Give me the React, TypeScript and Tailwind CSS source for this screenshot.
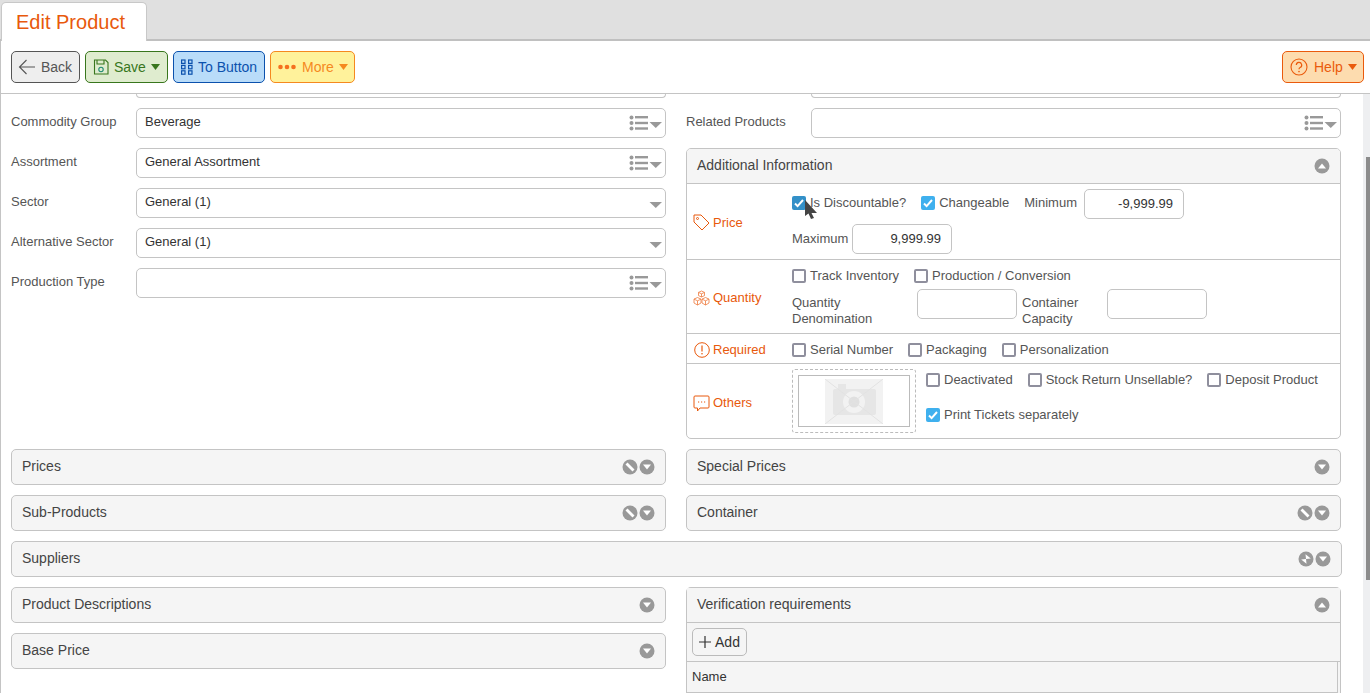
import type { ReactNode } from 'react';

const ORANGE = 'text-[#e8590c]';

function ListCaret({ list = true }: { list?: boolean }) {
  return (
    <svg width="34" height="16" viewBox="0 0 34 16" className="shrink-0">
      {list && (
        <g fill="#999" transform="translate(1 0)">
          <circle cx="2.5" cy="2.5" r="2" />
          <circle cx="2.5" cy="8" r="2" />
          <circle cx="2.5" cy="13.5" r="2" />
          <rect x="6" y="1" width="13" height="2.4" />
          <rect x="6" y="6.8" width="13" height="2.4" />
          <rect x="6" y="12.3" width="13" height="2.4" />
        </g>
      )}
      <path d="M21.500 7h12.500l-6.250 6z" fill="#999" />
    </svg>
  );
}

function Field({ label, value, list = true }: { label: string; value?: string; list?: boolean }) {
  return (
    <div className="flex items-start">
      <div className="w-[125px] shrink-0 pt-[6px] text-[13px] leading-[15px] text-[#555]">{label}</div>
      <div className="flex h-[30px] flex-1 items-center justify-between rounded-[5px] border border-[#c4c4c4] bg-white pl-2 pr-[3px]">
        <span className="-mt-[3px] text-[13px] text-[#333]">{value}</span>
        <ListCaret list={list} />
      </div>
    </div>
  );
}

function RoundIcon({ kind }: { kind: 'up' | 'down' | 'slash' | 'cross' }) {
  return (
    <svg width="16" height="16" viewBox="0 0 16 16" className="shrink-0">
      <circle cx="8" cy="8" r="7.5" fill="#999" />
      {kind === 'up' && <path d="M4 10.5h8L8 5.5z" fill="#fff" />}
      {kind === 'down' && <path d="M4 5.5h8L8 10.5z" fill="#fff" />}
      {kind === 'slash' && <path d="M4.500 4.500l7 7" stroke="#fff" strokeWidth="2.800" />}
      {kind === 'cross' && (
        <g fill="#fff">
          <path d="M8 8l-.5-4.800 5.300 4.300z" />
          <path d="M8 8l.5 4.800-5.300-4.300z" />
        </g>
      )}
    </svg>
  );
}

function PanelHeader({ title, icons, bare }: { title: string; icons: ('up' | 'down' | 'slash' | 'cross')[]; bare?: boolean }) {
  return (
    <div
      className={`flex items-center justify-between bg-[#f5f5f5] pl-[10px] pr-[10px] ${
        bare ? 'h-[35px] border-b border-[#c4c4c4]' : 'h-[36px] rounded-[5px] border border-[#c4c4c4]'
      }`}
    >
      <span className="-mt-[2px] text-[14px] text-[#444]">{title}</span>
      <div className="flex items-center gap-[1px]">
        {icons.map((k, i) => (
          <RoundIcon key={i} kind={k} />
        ))}
      </div>
    </div>
  );
}

function Check({ label, checked, hover }: { label: string; checked?: boolean; hover?: boolean }) {
  return (
    <label className="flex items-center gap-1 text-[13px] leading-[15px] text-[#555]">
      <span
        className={`flex h-[14px] w-[14px] shrink-0 items-center justify-center rounded-[2px] ${
          checked
            ? hover
              ? 'bg-[#3390c8]'
              : 'bg-[#3fb0ee]'
            : 'border-2 border-[#8f8f9d] bg-white'
        }`}
      >
        {checked && (
          <svg width="10" height="10" viewBox="0 0 10 10">
            <path d="M1 5.5l2.6 2.6L9 2" fill="none" stroke="#fff" strokeWidth="2" />
          </svg>
        )}
      </span>
      {label}
    </label>
  );
}

function NumInput({ value }: { value?: string }) {
  return (
    <div className="flex h-[30px] w-[100px] shrink-0 items-center justify-end rounded-[5px] border border-[#c4c4c4] bg-white pr-[10px] text-[13px] text-[#333]">
      {value}
    </div>
  );
}

function InfoRow({
  icon,
  label,
  height,
  children,
  last,
}: {
  icon: ReactNode;
  label: string;
  height: string;
  children: ReactNode;
  last?: boolean;
}) {
  return (
    <div className={`flex ${height} ${last ? '' : 'border-b border-[#c4c4c4]'}`}>
      <div className={`flex w-[105px] shrink-0 items-center gap-[3px] pl-[6px] text-[13px] ${last ? 'pt-[4px]' : 'pt-[2px]'} ${ORANGE}`}>
        <span className="flex w-[17px] justify-center">{icon}</span>
        {label}
      </div>
      <div className="flex-1">{children}</div>
    </div>
  );
}

function Btn({
  className,
  icon,
  label,
  caret,
  caretColor,
}: {
  className: string;
  icon: ReactNode;
  label: string;
  caret?: boolean;
  caretColor?: string;
}) {
  return (
    <button className={`flex h-[32px] items-center rounded-[5px] border text-[14px] ${className}`}>
      {icon}
      <span>{label}</span>
      {caret && (
        <svg width="9" height="6" viewBox="0 0 9 6" className="ml-[5px]">
          <path d="M0 0h9L4.5 6z" fill={caretColor} />
        </svg>
      )}
    </button>
  );
}

function CameraPlaceholder() {
  return (
    <svg width="58" height="45" viewBox="0 0 58 45">
      <rect width="58" height="45" rx="2" fill="#f2f2f2" />
      <rect x="8" y="10" width="43" height="26" rx="2" fill="#e6e6e6" />
      <rect x="13" y="5" width="8" height="6" fill="#e6e6e6" />
      <circle cx="29" cy="23" r="11" fill="#f2f2f2" />
      <circle cx="29" cy="23" r="5.5" fill="#e0e0e0" />
      <path d="M0 0l58 45M58 0L0 45" stroke="#e2e2e2" strokeWidth="1" />
    </svg>
  );
}

export default function App() {
  return (
    <div className="flex h-[693px] w-[1370px] flex-col overflow-hidden bg-white [font-family:Liberation_Sans,Arial,sans-serif]">
      {/* Tab bar */}
      <div className="flex h-[41px] shrink-0 items-end border-b-2 border-[#c0c0c0] bg-[#e0e0e0] pl-[1px]">
        <div className="-mb-[2px] flex h-[39px] w-[146px] items-center rounded-t-[5px] border-x border-t border-[#c8c8c8] bg-white pl-[14px] text-[20px] text-[#e8590c]">
          Edit Product
        </div>
      </div>

      {/* Toolbar */}
      <div className="flex h-[53px] shrink-0 items-center justify-between border-b border-l border-[#c4c4c4] pl-[10px] pr-[5px]">
        <div className="flex items-center gap-[5px]">
          <Btn
            className="w-[69px] border-[#555] bg-[#eeeeee] pl-[6px] text-[#555]"
            label="Back"
            icon={
              <svg width="18" height="16" viewBox="0 0 18 16" className="mr-[5px]">
                <path d="M17 8H1.500M8.500 1L1.500 8l7 7" fill="none" stroke="#555" strokeWidth="1.100" />
              </svg>
            }
          />
          <Btn
            className="w-[83px] border-[#38761d] bg-[#dfeccf] pl-[7px] text-[#38761d]"
            label="Save"
            caret
            caretColor="#38761d"
            icon={
              <svg width="16" height="16" viewBox="0 0 16 16" className="mr-[5px]">
                <path d="M1.500 1h11L15 3.500V15H1.500z" fill="none" stroke="#38761d" strokeWidth="1.100" />
                <path d="M4 1v4h7V1" fill="none" stroke="#38761d" strokeWidth="1.100" />
                <circle cx="8" cy="10.500" r="2.200" fill="none" stroke="#1f8a70" strokeWidth="1.100" />
              </svg>
            }
          />
          <Btn
            className="w-[92px] border-[#0b51ad] bg-[#b9dcf9] pl-[7px] text-[#0b51ad]"
            label="To Button"
            icon={
              <svg width="12" height="16" viewBox="0 0 12 16" className="mr-[5px]">
                <g fill="none" stroke="#0b51ad" strokeWidth="1.200">
                  <rect x="0.600" y="1" width="3.400" height="3.400" />
                  <rect x="7.600" y="1" width="3.400" height="3.400" />
                  <rect x="0.600" y="6.400" width="3.400" height="3.400" />
                  <rect x="7.600" y="6.400" width="3.400" height="3.400" />
                  <rect x="0.600" y="11.800" width="3.400" height="3.400" />
                  <rect x="7.600" y="11.800" width="3.400" height="3.400" />
                </g>
              </svg>
            }
          />
          <Btn
            className="w-[85px] border-[#f5891f] bg-[#fff29b] pl-[7px] text-[#f5891f]"
            label="More"
            caret
            caretColor="#f5891f"
            icon={
              <svg width="18" height="6" viewBox="0 0 18 6" className="mr-[6px]">
                <g fill="#f5701f">
                  <circle cx="2.500" cy="3" r="2.300" />
                  <circle cx="9" cy="3" r="2.300" />
                  <circle cx="15.500" cy="3" r="2.300" />
                </g>
              </svg>
            }
          />
        </div>
        <Btn
          className="mr-[1px] w-[82px] border-[#ea5a0c] bg-[#fddcaf] pl-[7px] text-[#ea5a0c]"
          label="Help"
          caret
          caretColor="#ea5a0c"
          icon={
            <svg width="18" height="18" viewBox="0 0 18 18" className="mr-[6px]">
              <circle cx="9" cy="9" r="8" fill="none" stroke="#ea5a0c" strokeWidth="1.100" />
              <path d="M6.300 7a2.700 2.700 0 1 1 3.800 2.500c-.8.4-1.100.9-1.100 1.800" fill="none" stroke="#ea5a0c" strokeWidth="1.200" />
              <circle cx="9" cy="13.600" r=".8" fill="#ea5a0c" />
            </svg>
          }
        />
      </div>

      {/* Scrolled content */}
      <div className="flex min-h-0 flex-1 border-l border-[#c4c4c4]">
        <div className="w-[1361px] shrink-0 overflow-hidden pl-[10px]">
          {/* Clipped row */}
          <div className="flex gap-[20px]">
            <div className="ml-[125px] h-[4px] w-[530px] rounded-b-[5px] border-x border-b border-[#c4c4c4]" />
            <div className="ml-[125px] h-[4px] w-[530px] rounded-b-[5px] border-x border-b border-[#c4c4c4]" />
          </div>

          <div className="mt-[10px] flex gap-[20px]">
            <div className="flex w-[655px] shrink-0 flex-col gap-[10px]">
              <Field label="Commodity Group" value="Beverage" />
              <Field label="Assortment" value="General Assortment" />
              <Field label="Sector" value="General (1)" list={false} />
              <Field label="Alternative Sector" value="General (1)" list={false} />
              <Field label="Production Type" />
            </div>

            <div className="flex w-[655px] shrink-0 flex-col gap-[10px]">
              <Field label="Related Products" />

              <div className="overflow-hidden rounded-[5px] border border-[#c4c4c4]">
                <PanelHeader title="Additional Information" icons={['up']} bare />

                <InfoRow
                  label="Price"
                  height="h-[76px]"
                  icon={
                    <svg width="17" height="17" viewBox="0 0 17 17">
                      <path d="M1 1h7l8 8-7 7-8-8z" fill="none" stroke="#e8590c" strokeWidth="1" strokeLinejoin="round" />
                      <circle cx="4.500" cy="4.500" r="1" fill="none" stroke="#e8590c" />
                    </svg>
                  }
                >
                  <div className="flex h-[35px] items-center pt-[4px]">
                    <div className="-mt-[2px] flex items-center">
                      <Check label="Is Discountable?" checked hover />
                      <div className="ml-[15px]">
                        <Check label="Changeable" checked />
                      </div>
                      <span className="ml-[15px] text-[13px] text-[#555]">Minimum</span>
                    </div>
                    <div className="ml-[7px]">
                      <NumInput value="-9,999.99" />
                    </div>
                  </div>
                  <div className="mt-[5px] flex items-center">
                    <span className="w-[60px] text-[13px] text-[#555]">Maximum</span>
                    <NumInput value="9,999.99" />
                  </div>
                </InfoRow>

                <InfoRow
                  label="Quantity"
                  height="h-[74px]"
                  icon={
                    <svg width="17" height="16" viewBox="0 0 17 16">
                      <g fill="none" stroke="#ee7a3c" strokeWidth=".8">
                        <path d="M8.500 1l3 1.400v3.200l-3 1.400-3-1.400V2.400z" />
                        <path d="M5.500 2.400l3 1.400 3-1.400M8.500 3.800V7" />
                        <path d="M4.500 7.500l3.500 1.600v3.900L4.500 15 1 13V9.100z" />
                        <path d="M1 9.100l3.500 1.700 3.500-1.700M4.500 10.800V15" />
                        <path d="M12.500 7.500l3.500 1.600v3.900L12.500 15 9 13V9.100z" />
                        <path d="M9 9.100l3.500 1.700 3.500-1.700M12.500 10.800V15" />
                      </g>
                    </svg>
                  }
                >
                  <div className="flex gap-[15px] pt-[8px]">
                    <Check label="Track Inventory" />
                    <Check label="Production / Conversion" />
                  </div>
                  <div className="mt-[6px] flex">
                    <div className="w-[125px] pt-[6px] text-[13px] leading-[16px] text-[#555]">
                      Quantity
                      <br />
                      Denomination
                    </div>
                    <NumInput />
                    <div className="ml-[5px] w-[85px] pt-[6px] text-[13px] leading-[16px] text-[#555]">
                      Container
                      <br />
                      Capacity
                    </div>
                    <NumInput />
                  </div>
                </InfoRow>

                <InfoRow
                  label="Required"
                  height="h-[30px]"
                  icon={
                    <svg width="16" height="16" viewBox="0 0 16 16">
                      <circle cx="8" cy="8" r="7.300" fill="none" stroke="#e8590c" strokeWidth="1" />
                      <path d="M8 3.500v6" stroke="#e8590c" strokeWidth="1.200" />
                      <circle cx="8" cy="11.800" r=".8" fill="#e8590c" />
                    </svg>
                  }
                >
                  <div className="flex h-full items-center gap-[15px] pt-[2px]">
                    <Check label="Serial Number" />
                    <Check label="Packaging" />
                    <Check label="Personalization" />
                  </div>
                </InfoRow>

                <InfoRow
                  label="Others"
                  height="h-[74px]"
                  last
                  icon={
                    <svg width="17" height="17" viewBox="0 0 17 17">
                      <path d="M2 1h13a1 1 0 0 1 1 1v10a1 1 0 0 1-1 1H7l-2.500 3v-3H2a1 1 0 0 1-1-1V2a1 1 0 0 1 1-1z" fill="none" stroke="#e8590c" strokeWidth="1" />
                      <path d="M5 7h1.200M8 7h1.200M11 7h1.200" stroke="#e8590c" strokeWidth="1" />
                    </svg>
                  }
                >
                  <div className="flex pt-[5px]">
                    <div className="flex h-[64px] w-[124px] shrink-0 items-center justify-center rounded-[3px] border border-dashed border-[#bbb]">
                      <div className="flex h-[52px] w-[112px] items-center justify-center border border-[#bbb]">
                        <CameraPlaceholder />
                      </div>
                    </div>
                    <div className="ml-[10px]">
                      <div className="flex gap-[15px] pt-[3px]">
                        <Check label="Deactivated" />
                        <Check label="Stock Return Unsellable?" />
                        <Check label="Deposit Product" />
                      </div>
                      <div className="mt-[20px]">
                        <Check label="Print Tickets separately" checked />
                      </div>
                    </div>
                  </div>
                </InfoRow>
              </div>
            </div>
          </div>

          <div className="mt-[10px] flex gap-[20px]">
            <div className="flex w-[655px] shrink-0 flex-col gap-[10px]">
              <PanelHeader title="Prices" icons={['slash', 'down']} />
              <PanelHeader title="Sub-Products" icons={['slash', 'down']} />
            </div>
            <div className="flex w-[655px] shrink-0 flex-col gap-[10px]">
              <PanelHeader title="Special Prices" icons={['down']} />
              <PanelHeader title="Container" icons={['slash', 'down']} />
            </div>
          </div>

          <div className="mt-[10px] w-[1331px]">
            <PanelHeader title="Suppliers" icons={['cross', 'down']} />
          </div>

          <div className="mt-[10px] flex gap-[20px]">
            <div className="flex w-[655px] shrink-0 flex-col gap-[10px]">
              <PanelHeader title="Product Descriptions" icons={['down']} />
              <PanelHeader title="Base Price" icons={['down']} />
            </div>
            <div className="w-[655px] shrink-0 rounded-t-[5px] border-x border-t border-[#c4c4c4] bg-[#f5f5f5]">
              <PanelHeader title="Verification requirements" icons={['up']} bare />
              <div className="flex h-[39px] items-start border-b border-[#c4c4c4] pl-[5px] pt-[5px]">
                <button className="flex h-[28px] w-[55px] items-center justify-center gap-[4px] rounded-[5px] border border-[#bbb] bg-[#f5f5f5] text-[14px] text-[#333]">
                  <svg width="12" height="12" viewBox="0 0 12 12">
                    <path d="M6 0v12M0 6h12" stroke="#333" strokeWidth="1.200" />
                  </svg>
                  Add
                </button>
              </div>
              <div className="flex h-[31px] w-[651px] items-center border-r border-b border-[#c4c4c4] pl-[5px] text-[13px] text-[#333]">
                Name
              </div>
            </div>
          </div>
        </div>

        {/* Scrollbar */}
        <div className="ml-[1px] h-full w-[7px] bg-[#eeeff1] pl-[3px]">
          <div className="mt-[63px] h-[423px] w-[5px] bg-[#8c8c8c]" />
        </div>
      </div>

      {/* Mouse pointer over the first checkbox */}
      <svg width="14" height="20" viewBox="0 0 14 20" className="absolute left-[804px] top-[200px]">
        <path d="M1 0v16l3.500-2.500L7 19l3-1-2.500-5H13z" fill="#444" />
      </svg>
    </div>
  );
}
